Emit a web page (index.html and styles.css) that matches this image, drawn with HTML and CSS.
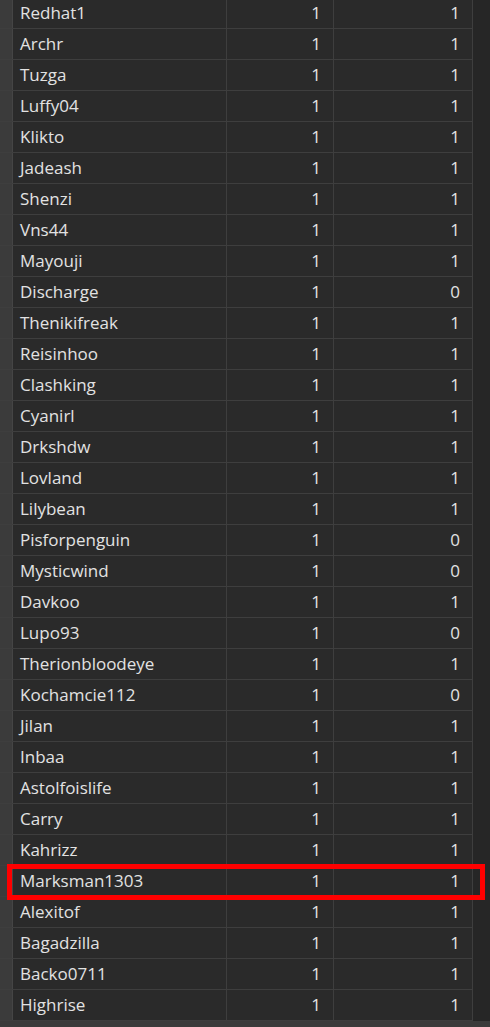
FILE: index.html
```html
<!DOCTYPE html>
<html>
<head>
<meta charset="utf-8">
<link rel="stylesheet" href="styles.css">
</head>
<body>
<div class="view">
  <div class="main">
    <div class="grid" id="grid">
      <div class="row"><div class="hdr"></div><div class="c name">Redhat1</div><div class="c num">1</div><div class="c num">1</div></div>
      <div class="row"><div class="hdr"></div><div class="c name">Archr</div><div class="c num">1</div><div class="c num">1</div></div>
      <div class="row"><div class="hdr"></div><div class="c name">Tuzga</div><div class="c num">1</div><div class="c num">1</div></div>
      <div class="row"><div class="hdr"></div><div class="c name">Luffy04</div><div class="c num">1</div><div class="c num">1</div></div>
      <div class="row"><div class="hdr"></div><div class="c name">Klikto</div><div class="c num">1</div><div class="c num">1</div></div>
      <div class="row"><div class="hdr"></div><div class="c name">Jadeash</div><div class="c num">1</div><div class="c num">1</div></div>
      <div class="row"><div class="hdr"></div><div class="c name">Shenzi</div><div class="c num">1</div><div class="c num">1</div></div>
      <div class="row"><div class="hdr"></div><div class="c name">Vns44</div><div class="c num">1</div><div class="c num">1</div></div>
      <div class="row"><div class="hdr"></div><div class="c name">Mayouji</div><div class="c num">1</div><div class="c num">1</div></div>
      <div class="row"><div class="hdr"></div><div class="c name">Discharge</div><div class="c num">1</div><div class="c num">0</div></div>
      <div class="row"><div class="hdr"></div><div class="c name">Thenikifreak</div><div class="c num">1</div><div class="c num">1</div></div>
      <div class="row"><div class="hdr"></div><div class="c name">Reisinhoo</div><div class="c num">1</div><div class="c num">1</div></div>
      <div class="row"><div class="hdr"></div><div class="c name">Clashking</div><div class="c num">1</div><div class="c num">1</div></div>
      <div class="row"><div class="hdr"></div><div class="c name">Cyanirl</div><div class="c num">1</div><div class="c num">1</div></div>
      <div class="row"><div class="hdr"></div><div class="c name">Drkshdw</div><div class="c num">1</div><div class="c num">1</div></div>
      <div class="row"><div class="hdr"></div><div class="c name">Lovland</div><div class="c num">1</div><div class="c num">1</div></div>
      <div class="row"><div class="hdr"></div><div class="c name">Lilybean</div><div class="c num">1</div><div class="c num">1</div></div>
      <div class="row"><div class="hdr"></div><div class="c name">Pisforpenguin</div><div class="c num">1</div><div class="c num">0</div></div>
      <div class="row"><div class="hdr"></div><div class="c name">Mysticwind</div><div class="c num">1</div><div class="c num">0</div></div>
      <div class="row"><div class="hdr"></div><div class="c name">Davkoo</div><div class="c num">1</div><div class="c num">1</div></div>
      <div class="row"><div class="hdr"></div><div class="c name">Lupo93</div><div class="c num">1</div><div class="c num">0</div></div>
      <div class="row"><div class="hdr"></div><div class="c name">Therionbloodeye</div><div class="c num">1</div><div class="c num">1</div></div>
      <div class="row"><div class="hdr"></div><div class="c name">Kochamcie112</div><div class="c num">1</div><div class="c num">0</div></div>
      <div class="row"><div class="hdr"></div><div class="c name">Jilan</div><div class="c num">1</div><div class="c num">1</div></div>
      <div class="row"><div class="hdr"></div><div class="c name">Inbaa</div><div class="c num">1</div><div class="c num">1</div></div>
      <div class="row"><div class="hdr"></div><div class="c name">Astolfoislife</div><div class="c num">1</div><div class="c num">1</div></div>
      <div class="row"><div class="hdr"></div><div class="c name">Carry</div><div class="c num">1</div><div class="c num">1</div></div>
      <div class="row"><div class="hdr"></div><div class="c name">Kahrizz</div><div class="c num">1</div><div class="c num">1</div></div>
      <div class="row marked"><div class="hdr"></div><div class="c name">Marksman1303</div><div class="c num">1</div><div class="c num">1</div><div class="mark"></div></div>
      <div class="row"><div class="hdr"></div><div class="c name">Alexitof</div><div class="c num">1</div><div class="c num">1</div></div>
      <div class="row"><div class="hdr"></div><div class="c name">Bagadzilla</div><div class="c num">1</div><div class="c num">1</div></div>
      <div class="row"><div class="hdr"></div><div class="c name">Backo0711</div><div class="c num">1</div><div class="c num">1</div></div>
      <div class="row"><div class="hdr"></div><div class="c name">Highrise</div><div class="c num">1</div><div class="c num">1</div></div>
    </div>
    <div class="vscroll"></div>
  </div>
  <div class="hscroll"></div>
</div>
</body>
</html>
```
FILE: styles.css
```css
html, body {
  margin: 0;
  padding: 0;
  background: #262626;
}
.view {
  width: 490px;
  height: 1027px;
  overflow: hidden;
  display: flex;
  flex-direction: column;
}
.main {
  display: flex;
  height: 1021px;
  overflow: hidden;
}
.grid {
  width: 473px;
  margin-top: -2px;
  flex: none;
}
.vscroll {
  flex: 1;
  background: #262626;
}
.hscroll {
  flex: 1;
  background: #3b3b3b;
}
.row {
  display: grid;
  grid-template-columns: 13px 214px 107px 139px;
  height: 31px;
  box-sizing: border-box;
  border-bottom: 1px solid #3e3e3e;
  background: #2a2a2a;
}
.hdr {
  background: #3b3b3b;
  border-right: 1px solid #454545;
}
.c {
  border-right: 1px solid #3e3e3e;
  font-family: "Open Sans", "Noto Sans", sans-serif;
  font-size: 17px;
  line-height: 30px;
  color: #e2e2e2;
  white-space: nowrap;
  overflow: hidden;
}
.name {
  padding-left: 7px;
}
.num {
  text-align: right;
  padding-right: 12px;
}
.marked {
  position: relative;
}
.mark {
  position: absolute;
  left: 7px;
  top: -2px;
  right: -12px;
  bottom: -4px;
  border: 5px solid #ff0000;
  pointer-events: none;
}
```
